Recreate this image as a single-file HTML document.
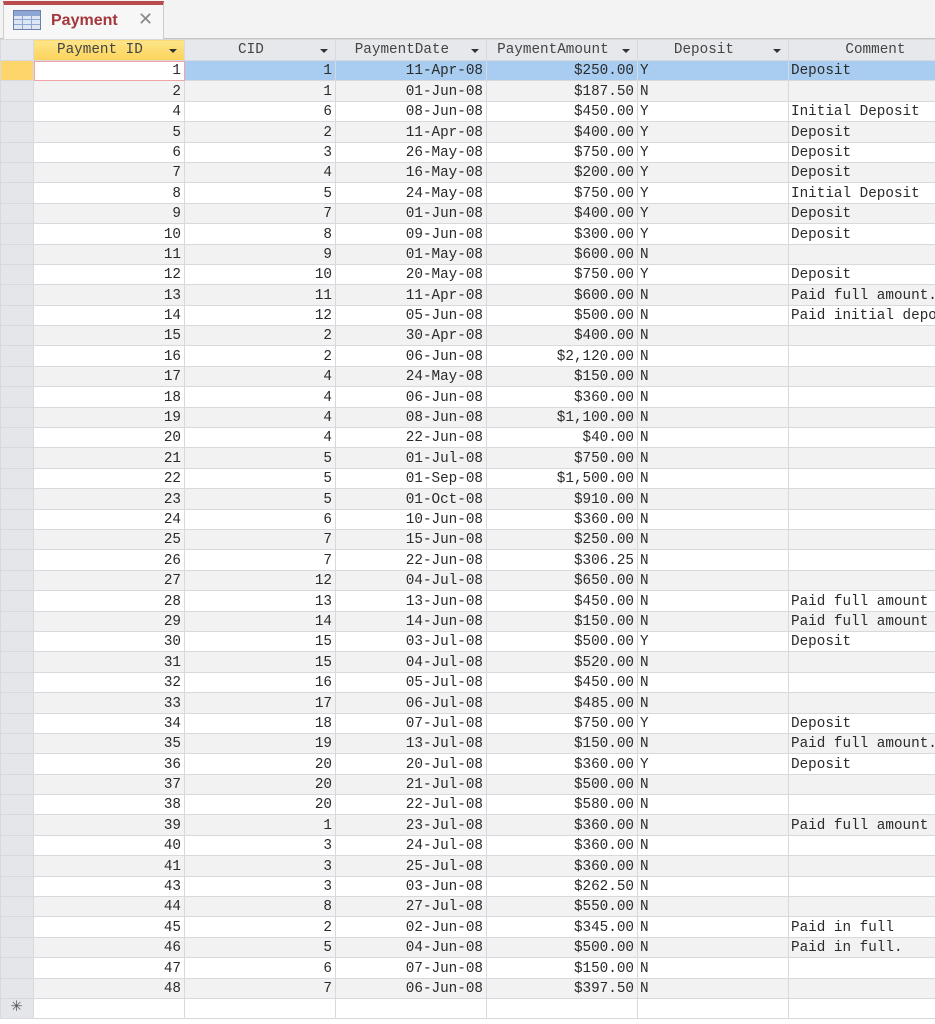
<!DOCTYPE html>
<html><head><meta charset="utf-8"><style>
*{margin:0;padding:0;box-sizing:border-box}
body{width:935px;height:1024px;overflow:hidden;background:#fff;position:relative;font-family:"Liberation Mono","Noto Serif CJK SC",monospace;font-size:14.3px;color:#2a2a2a}
.tabbar{position:absolute;left:0;top:0;width:935px;height:39px;background:#f3f3f3;border-bottom:1px solid #c6c6c6}
.tab{position:absolute;left:3px;top:1px;width:161px;height:38px;background:#f7f7f7;border-top:4px solid #b94a4e;border-left:1px solid #ccc;border-right:1px solid #ccc}
.tab .t{position:absolute;left:47px;top:7px;font:bold 16px "Liberation Sans",sans-serif;color:#a4373a}
.tab .x{position:absolute;left:134px;top:4px;font:18px "Liberation Sans",sans-serif;color:#888}
.ico{position:absolute;left:9px;top:5px;width:28px;height:20px;border:1px solid #6d80a8;background:linear-gradient(#8ea6d4 0 5px,transparent 5px);}
.ico:before{content:"";position:absolute;inset:5px 0 0 0;background:repeating-linear-gradient(90deg,transparent 0 8px,#8ea6d4 8px 9px),repeating-linear-gradient(0deg,#dfe6f3 0 4px,#8ea6d4 4px 5px)}
table{position:absolute;left:0;top:39px;border-collapse:collapse;table-layout:fixed;width:980px}
td,th{border:1px solid #d6d9de;height:20.4px;white-space:nowrap;overflow:hidden;padding:0 3px 0 2px;line-height:17px;vertical-align:bottom}
th{background:#e6e8eb;font-weight:normal;color:#444;position:relative;text-align:center;height:21px;vertical-align:middle}
th:after{content:"";position:absolute;right:7px;top:9px;border:4px solid transparent;border-top:4px solid #333;border-bottom:0}
th.s:after{display:none}
th.y{background:linear-gradient(#fde58a,#fbd35a)}
td{text-align:right}
td.l{text-align:left}
tr:nth-child(odd) td{background:#f2f2f2}
tr:nth-child(odd) td.sel,tr:nth-child(even) td.sel{background:#e4e6ea}
tr.a td{background:#a8cdf0 !important}
tr.a td.sel{background:#fdd56a !important}
tr.a td.c1{background:#fff !important;outline:1px solid #f1a3a7;outline-offset:-1px}
</style></head><body>
<div class="tabbar"><div class="tab"><div class="ico"></div><span class="t">Payment</span><span class="x">✕</span></div></div>
<table>
<colgroup><col style="width:33px"><col style="width:151px"><col style="width:151px"><col style="width:151px"><col style="width:151px"><col style="width:151px"><col style="width:192px"></colgroup>
<tr><th class="s"></th><th class="y">Payment ID&nbsp;&nbsp;</th><th>CID&nbsp;&nbsp;</th><th>PaymentDate&nbsp;&nbsp;</th><th>PaymentAmount&nbsp;&nbsp;</th><th>Deposit&nbsp;&nbsp;</th><th>Comment&nbsp;&nbsp;</th></tr>
<tr class="a"><td class="sel"></td><td class="c1">1</td><td>1</td><td>11-Apr-08</td><td>$250.00</td><td class="l">Y</td><td class="l">Deposit</td></tr>
<tr><td class="sel"></td><td>2</td><td>1</td><td>01-Jun-08</td><td>$187.50</td><td class="l">N</td><td class="l"></td></tr>
<tr><td class="sel"></td><td>4</td><td>6</td><td>08-Jun-08</td><td>$450.00</td><td class="l">Y</td><td class="l">Initial Deposit</td></tr>
<tr><td class="sel"></td><td>5</td><td>2</td><td>11-Apr-08</td><td>$400.00</td><td class="l">Y</td><td class="l">Deposit</td></tr>
<tr><td class="sel"></td><td>6</td><td>3</td><td>26-May-08</td><td>$750.00</td><td class="l">Y</td><td class="l">Deposit</td></tr>
<tr><td class="sel"></td><td>7</td><td>4</td><td>16-May-08</td><td>$200.00</td><td class="l">Y</td><td class="l">Deposit</td></tr>
<tr><td class="sel"></td><td>8</td><td>5</td><td>24-May-08</td><td>$750.00</td><td class="l">Y</td><td class="l">Initial Deposit</td></tr>
<tr><td class="sel"></td><td>9</td><td>7</td><td>01-Jun-08</td><td>$400.00</td><td class="l">Y</td><td class="l">Deposit</td></tr>
<tr><td class="sel"></td><td>10</td><td>8</td><td>09-Jun-08</td><td>$300.00</td><td class="l">Y</td><td class="l">Deposit</td></tr>
<tr><td class="sel"></td><td>11</td><td>9</td><td>01-May-08</td><td>$600.00</td><td class="l">N</td><td class="l"></td></tr>
<tr><td class="sel"></td><td>12</td><td>10</td><td>20-May-08</td><td>$750.00</td><td class="l">Y</td><td class="l">Deposit</td></tr>
<tr><td class="sel"></td><td>13</td><td>11</td><td>11-Apr-08</td><td>$600.00</td><td class="l">N</td><td class="l">Paid full amount.</td></tr>
<tr><td class="sel"></td><td>14</td><td>12</td><td>05-Jun-08</td><td>$500.00</td><td class="l">N</td><td class="l">Paid initial deposit</td></tr>
<tr><td class="sel"></td><td>15</td><td>2</td><td>30-Apr-08</td><td>$400.00</td><td class="l">N</td><td class="l"></td></tr>
<tr><td class="sel"></td><td>16</td><td>2</td><td>06-Jun-08</td><td>$2,120.00</td><td class="l">N</td><td class="l"></td></tr>
<tr><td class="sel"></td><td>17</td><td>4</td><td>24-May-08</td><td>$150.00</td><td class="l">N</td><td class="l"></td></tr>
<tr><td class="sel"></td><td>18</td><td>4</td><td>06-Jun-08</td><td>$360.00</td><td class="l">N</td><td class="l"></td></tr>
<tr><td class="sel"></td><td>19</td><td>4</td><td>08-Jun-08</td><td>$1,100.00</td><td class="l">N</td><td class="l"></td></tr>
<tr><td class="sel"></td><td>20</td><td>4</td><td>22-Jun-08</td><td>$40.00</td><td class="l">N</td><td class="l"></td></tr>
<tr><td class="sel"></td><td>21</td><td>5</td><td>01-Jul-08</td><td>$750.00</td><td class="l">N</td><td class="l"></td></tr>
<tr><td class="sel"></td><td>22</td><td>5</td><td>01-Sep-08</td><td>$1,500.00</td><td class="l">N</td><td class="l"></td></tr>
<tr><td class="sel"></td><td>23</td><td>5</td><td>01-Oct-08</td><td>$910.00</td><td class="l">N</td><td class="l"></td></tr>
<tr><td class="sel"></td><td>24</td><td>6</td><td>10-Jun-08</td><td>$360.00</td><td class="l">N</td><td class="l"></td></tr>
<tr><td class="sel"></td><td>25</td><td>7</td><td>15-Jun-08</td><td>$250.00</td><td class="l">N</td><td class="l"></td></tr>
<tr><td class="sel"></td><td>26</td><td>7</td><td>22-Jun-08</td><td>$306.25</td><td class="l">N</td><td class="l"></td></tr>
<tr><td class="sel"></td><td>27</td><td>12</td><td>04-Jul-08</td><td>$650.00</td><td class="l">N</td><td class="l"></td></tr>
<tr><td class="sel"></td><td>28</td><td>13</td><td>13-Jun-08</td><td>$450.00</td><td class="l">N</td><td class="l">Paid full amount</td></tr>
<tr><td class="sel"></td><td>29</td><td>14</td><td>14-Jun-08</td><td>$150.00</td><td class="l">N</td><td class="l">Paid full amount</td></tr>
<tr><td class="sel"></td><td>30</td><td>15</td><td>03-Jul-08</td><td>$500.00</td><td class="l">Y</td><td class="l">Deposit</td></tr>
<tr><td class="sel"></td><td>31</td><td>15</td><td>04-Jul-08</td><td>$520.00</td><td class="l">N</td><td class="l"></td></tr>
<tr><td class="sel"></td><td>32</td><td>16</td><td>05-Jul-08</td><td>$450.00</td><td class="l">N</td><td class="l"></td></tr>
<tr><td class="sel"></td><td>33</td><td>17</td><td>06-Jul-08</td><td>$485.00</td><td class="l">N</td><td class="l"></td></tr>
<tr><td class="sel"></td><td>34</td><td>18</td><td>07-Jul-08</td><td>$750.00</td><td class="l">Y</td><td class="l">Deposit</td></tr>
<tr><td class="sel"></td><td>35</td><td>19</td><td>13-Jul-08</td><td>$150.00</td><td class="l">N</td><td class="l">Paid full amount.</td></tr>
<tr><td class="sel"></td><td>36</td><td>20</td><td>20-Jul-08</td><td>$360.00</td><td class="l">Y</td><td class="l">Deposit</td></tr>
<tr><td class="sel"></td><td>37</td><td>20</td><td>21-Jul-08</td><td>$500.00</td><td class="l">N</td><td class="l"></td></tr>
<tr><td class="sel"></td><td>38</td><td>20</td><td>22-Jul-08</td><td>$580.00</td><td class="l">N</td><td class="l"></td></tr>
<tr><td class="sel"></td><td>39</td><td>1</td><td>23-Jul-08</td><td>$360.00</td><td class="l">N</td><td class="l">Paid full amount</td></tr>
<tr><td class="sel"></td><td>40</td><td>3</td><td>24-Jul-08</td><td>$360.00</td><td class="l">N</td><td class="l"></td></tr>
<tr><td class="sel"></td><td>41</td><td>3</td><td>25-Jul-08</td><td>$360.00</td><td class="l">N</td><td class="l"></td></tr>
<tr><td class="sel"></td><td>43</td><td>3</td><td>03-Jun-08</td><td>$262.50</td><td class="l">N</td><td class="l"></td></tr>
<tr><td class="sel"></td><td>44</td><td>8</td><td>27-Jul-08</td><td>$550.00</td><td class="l">N</td><td class="l"></td></tr>
<tr><td class="sel"></td><td>45</td><td>2</td><td>02-Jun-08</td><td>$345.00</td><td class="l">N</td><td class="l">Paid in full</td></tr>
<tr><td class="sel"></td><td>46</td><td>5</td><td>04-Jun-08</td><td>$500.00</td><td class="l">N</td><td class="l">Paid in full.</td></tr>
<tr><td class="sel"></td><td>47</td><td>6</td><td>07-Jun-08</td><td>$150.00</td><td class="l">N</td><td class="l"></td></tr>
<tr><td class="sel"></td><td>48</td><td>7</td><td>06-Jun-08</td><td>$397.50</td><td class="l">N</td><td class="l"></td></tr>
<tr><td class="sel" style="text-align:center;color:#555;vertical-align:middle">✳</td><td style="background:#fff"></td><td style="background:#fff"></td><td style="background:#fff"></td><td style="background:#fff"></td><td style="background:#fff"></td><td style="background:#fff"></td></tr>
</table>
</body></html>
